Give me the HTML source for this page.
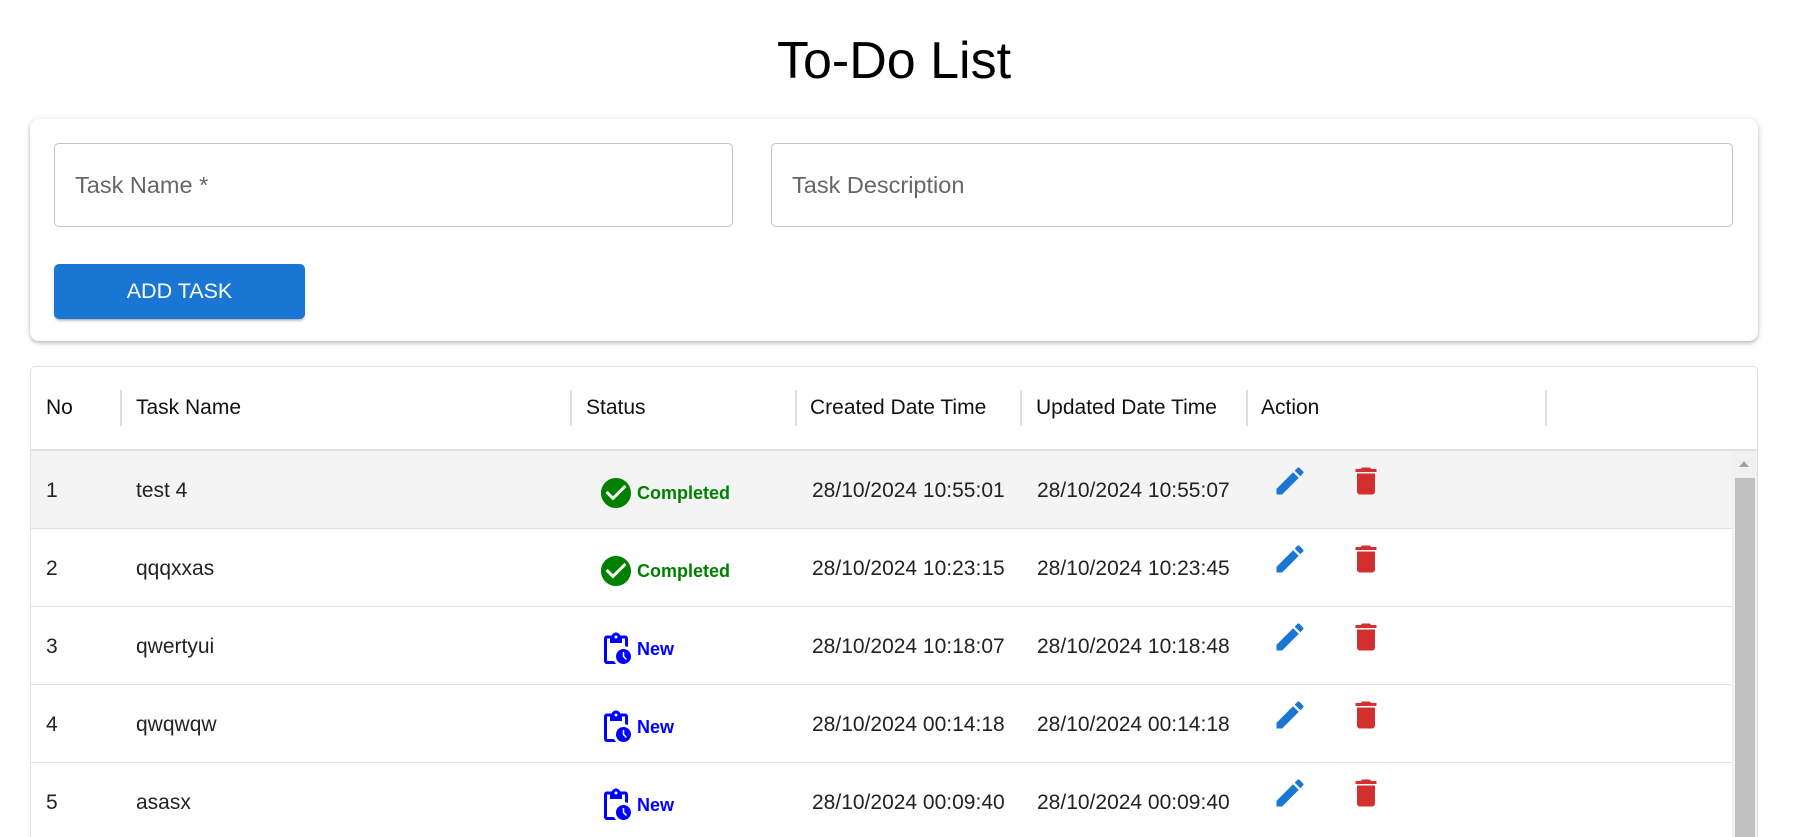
<!DOCTYPE html>
<html style="width:1819px;height:837px;overflow:hidden"><head><meta charset="utf-8"><style>
*{box-sizing:border-box;margin:0;padding:0}
body{width:1819px;height:837px;background:#fff;font-family:"Liberation Sans",Arial,sans-serif;color:rgba(0,0,0,.87);position:relative;overflow:hidden}
.abs{position:absolute}
h1{position:absolute;left:0;width:1788px;text-align:center;top:29px;font-size:52px;font-weight:400;color:#000;line-height:64px}
.card{left:30px;top:119px;width:1728px;height:222px;border-radius:9px;box-shadow:0 2px 3px rgba(0,0,0,.2),0 1px 8px rgba(0,0,0,.12);background:#fff}
.inp{top:143px;height:84px;border:1px solid #c4c4c4;border-radius:5px;font-size:23.5px;color:#666;padding-left:20px;line-height:82px}
.btn{left:54px;top:264px;width:251px;height:55px;background:#1976d2;border-radius:5px;color:#fff;font-size:21.5px;text-align:center;line-height:55px;box-shadow:0 3px 2px -2px rgba(0,0,0,.25),0 2px 3px rgba(0,0,0,.14)}
.tbl{left:30px;top:366px;width:1728px;height:500px;border:1px solid #e0e0e0;border-radius:5px}
.th{top:366px;height:84px;line-height:84px;font-size:21px;color:#111}
.sep{top:390px;width:2px;height:36px;background:#e0e0e0}
.row{left:31px;width:1701px;height:78px;border-bottom:1.5px solid #e0e0e0}
.td{font-size:21px;color:#222;line-height:22px}
.st{font-size:18px;font-weight:bold}
</style></head><body>
<h1>To-Do List</h1>
<div class="abs card"></div>
<div class="abs inp" style="left:54px;width:679px">Task Name *</div>
<div class="abs inp" style="left:771px;width:962px">Task Description</div>
<div class="abs btn">ADD TASK</div>

<div class="abs tbl"></div>
<div class="abs th" style="left:46px">No</div>
<div class="abs th" style="left:136px">Task Name</div>
<div class="abs th" style="left:586px">Status</div>
<div class="abs th" style="left:810px">Created Date Time</div>
<div class="abs th" style="left:1036px">Updated Date Time</div>
<div class="abs th" style="left:1261px">Action</div>
<div class="abs sep" style="left:120px"></div>
<div class="abs sep" style="left:570px"></div>
<div class="abs sep" style="left:795px"></div>
<div class="abs sep" style="left:1020px"></div>
<div class="abs sep" style="left:1246px"></div>
<div class="abs sep" style="left:1545px"></div>
<div class="abs" style="left:31px;top:449px;width:1726px;height:1.5px;background:#e0e0e0"></div>

<div class="abs row" style="top:451px;background:#f4f4f4"></div>
<div class="abs row" style="top:529px"></div>
<div class="abs row" style="top:607px"></div>
<div class="abs row" style="top:685px"></div>
<div class="abs row" style="top:763px"></div>

<div class="abs" style="left:1732px;top:451px;width:25px;height:386px;background:#f1f1f1"></div>
<div class="abs" style="left:1735px;top:478px;width:20px;height:359px;background:#c1c1c1"></div>
<div class="abs" style="left:1739px;top:461px;width:0;height:0;border-left:5.5px solid transparent;border-right:5.5px solid transparent;border-bottom:6px solid #a3a3a3"></div>

<div class="abs td" style="left:46px;top:480px">1</div><div class="abs td" style="left:136px;top:480px">test 4</div>
<div class="abs td" style="left:812px;top:480px">28/10/2024 10:55:01</div><div class="abs td" style="left:1037px;top:480px">28/10/2024 10:55:07</div>
<div class="abs td" style="left:46px;top:558px">2</div><div class="abs td" style="left:136px;top:558px">qqqxxas</div>
<div class="abs td" style="left:812px;top:558px">28/10/2024 10:23:15</div><div class="abs td" style="left:1037px;top:558px">28/10/2024 10:23:45</div>
<div class="abs td" style="left:46px;top:636px">3</div><div class="abs td" style="left:136px;top:636px">qwertyui</div>
<div class="abs td" style="left:812px;top:636px">28/10/2024 10:18:07</div><div class="abs td" style="left:1037px;top:636px">28/10/2024 10:18:48</div>
<div class="abs td" style="left:46px;top:714px">4</div><div class="abs td" style="left:136px;top:714px">qwqwqw</div>
<div class="abs td" style="left:812px;top:714px">28/10/2024 00:14:18</div><div class="abs td" style="left:1037px;top:714px">28/10/2024 00:14:18</div>
<div class="abs td" style="left:46px;top:792px">5</div><div class="abs td" style="left:136px;top:792px">asasx</div>
<div class="abs td" style="left:812px;top:792px">28/10/2024 00:09:40</div><div class="abs td" style="left:1037px;top:792px">28/10/2024 00:09:40</div>

<svg class="abs" style="left:598px;top:475px" width="36" height="36" viewBox="0 0 24 24"><path fill="#008000" d="M12 2C6.48 2 2 6.48 2 12s4.48 10 10 10 10-4.48 10-10S17.52 2 12 2zm-2 15-5-5 1.41-1.41L10 14.17l7.59-7.59L19 8l-9 9z"/></svg>
<div class="abs st" style="left:637px;top:483px;color:#008000">Completed</div>
<svg class="abs" style="left:598px;top:553px" width="36" height="36" viewBox="0 0 24 24"><path fill="#008000" d="M12 2C6.48 2 2 6.48 2 12s4.48 10 10 10 10-4.48 10-10S17.52 2 12 2zm-2 15-5-5 1.41-1.41L10 14.17l7.59-7.59L19 8l-9 9z"/></svg>
<div class="abs st" style="left:637px;top:561px;color:#008000">Completed</div>

<svg class="abs" style="left:598px;top:631px" width="36" height="36" viewBox="0 0 24 24"><path fill="#0000ff" d="M17 12c-2.76 0-5 2.24-5 5s2.24 5 5 5 5-2.24 5-5-2.24-5-5-5zm1.65 7.35L16.5 17.2V14h1v2.79l1.85 1.85-.7.71zM18 3h-3.18C14.4 1.840 13.3 1 12 1s-2.4.84-2.82 2H6c-1.1 0-2 .9-2 2v15c0 1.1.9 2 2 2h6.11c-.59-.57-1.07-1.25-1.42-2H6V5h2v3h8V5h2v5.08c.71.1 1.38.31 2 .6V5c0-1.1-.9-2-2-2zm-6 2c-.55 0-1-.45-1-1s.45-1 1-1 1 .45 1 1-.45 1-1 1z"/></svg>
<div class="abs st" style="left:637px;top:639px;color:#0000ff">New</div>
<svg class="abs" style="left:598px;top:709px" width="36" height="36" viewBox="0 0 24 24"><path fill="#0000ff" d="M17 12c-2.76 0-5 2.24-5 5s2.24 5 5 5 5-2.24 5-5-2.24-5-5-5zm1.65 7.35L16.5 17.2V14h1v2.79l1.85 1.85-.7.71zM18 3h-3.18C14.4 1.84 13.3 1 12 1s-2.4.84-2.82 2H6c-1.1 0-2 .9-2 2v15c0 1.1.9 2 2 2h6.11c-.59-.57-1.07-1.25-1.42-2H6V5h2v3h8V5h2v5.08c.71.1 1.38.31 2 .6V5c0-1.1-.9-2-2-2zm-6 2c-.55 0-1-.45-1-1s.45-1 1-1 1 .45 1 1-.45 1-1 1z"/></svg>
<div class="abs st" style="left:637px;top:717px;color:#0000ff">New</div>
<svg class="abs" style="left:598px;top:787px" width="36" height="36" viewBox="0 0 24 24"><path fill="#0000ff" d="M17 12c-2.76 0-5 2.24-5 5s2.24 5 5 5 5-2.24 5-5-2.24-5-5-5zm1.65 7.35L16.5 17.2V14h1v2.79l1.85 1.85-.7.71zM18 3h-3.18C14.4 1.84 13.3 1 12 1s-2.4.84-2.82 2H6c-1.1 0-2 .9-2 2v15c0 1.1.9 2 2 2h6.11c-.59-.57-1.07-1.25-1.42-2H6V5h2v3h8V5h2v5.08c.71.1 1.38.31 2 .6V5c0-1.1-.9-2-2-2zm-6 2c-.55 0-1-.45-1-1s.45-1 1-1 1 .45 1 1-.45 1-1 1z"/></svg>
<div class="abs st" style="left:637px;top:795px;color:#0000ff">New</div>

<svg class="abs" style="left:1272px;top:463px" width="36" height="36" viewBox="0 0 24 24"><path fill="#1976d2" d="M3 17.25V21h3.75L17.81 9.94l-3.75-3.75L3 17.25zM20.71 7.04c.39-.39.39-1.02 0-1.41l-2.34-2.34a.9959.9959 0 0 0-1.41 0l-1.83 1.83 3.75 3.75 1.83-1.83z"/></svg>
<svg class="abs" style="left:1348px;top:463px" width="36" height="36" viewBox="0 0 24 24"><path fill="#d32f2f" d="M6 19c0 1.1.9 2 2 2h8c1.1 0 2-.9 2-2V7H6v12zM19 4h-3.5l-1-1h-5l-1 1H5v2h14V4z"/></svg>
<svg class="abs" style="left:1272px;top:541px" width="36" height="36" viewBox="0 0 24 24"><path fill="#1976d2" d="M3 17.25V21h3.75L17.81 9.94l-3.75-3.75L3 17.25zM20.71 7.04c.39-.39.39-1.02 0-1.41l-2.34-2.34a.9959.9959 0 0 0-1.41 0l-1.83 1.83 3.75 3.75 1.83-1.83z"/></svg>
<svg class="abs" style="left:1348px;top:541px" width="36" height="36" viewBox="0 0 24 24"><path fill="#d32f2f" d="M6 19c0 1.1.9 2 2 2h8c1.1 0 2-.9 2-2V7H6v12zM19 4h-3.5l-1-1h-5l-1 1H5v2h14V4z"/></svg>
<svg class="abs" style="left:1272px;top:619px" width="36" height="36" viewBox="0 0 24 24"><path fill="#1976d2" d="M3 17.25V21h3.75L17.81 9.94l-3.75-3.75L3 17.25zM20.71 7.04c.39-.39.39-1.02 0-1.41l-2.34-2.34a.9959.9959 0 0 0-1.41 0l-1.83 1.83 3.75 3.75 1.83-1.83z"/></svg>
<svg class="abs" style="left:1348px;top:619px" width="36" height="36" viewBox="0 0 24 24"><path fill="#d32f2f" d="M6 19c0 1.1.9 2 2 2h8c1.1 0 2-.9 2-2V7H6v12zM19 4h-3.5l-1-1h-5l-1 1H5v2h14V4z"/></svg>
<svg class="abs" style="left:1272px;top:697px" width="36" height="36" viewBox="0 0 24 24"><path fill="#1976d2" d="M3 17.25V21h3.75L17.81 9.94l-3.75-3.75L3 17.25zM20.71 7.04c.39-.39.39-1.02 0-1.41l-2.34-2.34a.9959.9959 0 0 0-1.41 0l-1.83 1.83 3.75 3.75 1.83-1.83z"/></svg>
<svg class="abs" style="left:1348px;top:697px" width="36" height="36" viewBox="0 0 24 24"><path fill="#d32f2f" d="M6 19c0 1.1.9 2 2 2h8c1.1 0 2-.9 2-2V7H6v12zM19 4h-3.5l-1-1h-5l-1 1H5v2h14V4z"/></svg>
<svg class="abs" style="left:1272px;top:775px" width="36" height="36" viewBox="0 0 24 24"><path fill="#1976d2" d="M3 17.25V21h3.75L17.81 9.94l-3.75-3.75L3 17.25zM20.71 7.04c.39-.39.39-1.02 0-1.41l-2.34-2.34a.9959.9959 0 0 0-1.41 0l-1.83 1.83 3.75 3.75 1.83-1.83z"/></svg>
<svg class="abs" style="left:1348px;top:775px" width="36" height="36" viewBox="0 0 24 24"><path fill="#d32f2f" d="M6 19c0 1.1.9 2 2 2h8c1.1 0 2-.9 2-2V7H6v12zM19 4h-3.5l-1-1h-5l-1 1H5v2h14V4z"/></svg>
</body></html>
